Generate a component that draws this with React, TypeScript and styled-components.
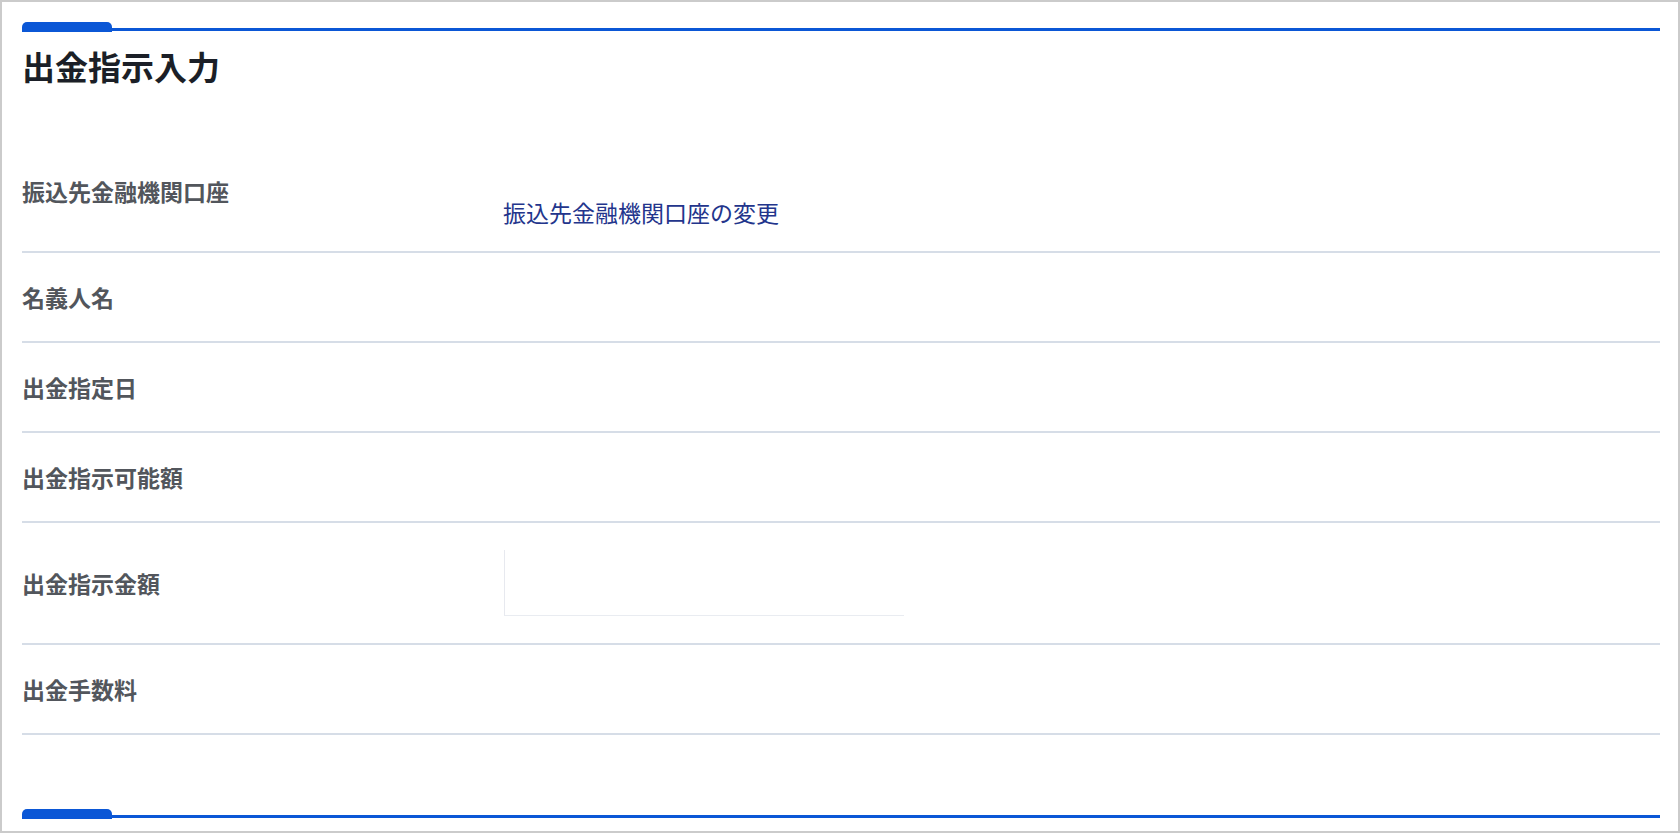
import styled, { createGlobalStyle } from 'styled-components'

const GlobalStyle = createGlobalStyle`
  html, body {
    margin: 0;
    padding: 0;
    background: #ffffff;
  }
  body {
    font-family: "Noto Sans CJK JP", "Noto Sans", sans-serif;
  }
`

const Frame = styled.div`
  box-sizing: border-box;
  width: 1680px;
  height: 833px;
  border: 2px solid #cbcbcb;
  padding: 20px 18px 0 20px;
  display: flex;
  flex-direction: column;
  background: #ffffff;
`

const Rule = styled.div`
  display: flex;
  align-items: flex-end;
  height: 10px;
  flex-shrink: 0;
`

const RuleTab = styled.div`
  width: 90px;
  height: 10px;
  background: #0b57d6;
  border-radius: 5px 5px 0 0;
`

const RuleLine = styled.div`
  flex: 1;
  height: 3px;
  margin-bottom: 1px;
  background: #0b57d6;
`

const Title = styled.h1`
  margin: 14px 0 0 0;
  height: 40px;
  line-height: 40px;
  font-size: 33px;
  font-weight: 700;
  color: #1b1f27;
`

const Table = styled.div`
  margin-top: 44px;
  display: flex;
  flex-direction: column;
`

const Row = styled.div<{ $height: number }>`
  display: grid;
  grid-template-columns: 483px 1fr;
  align-items: center;
  height: ${({ $height }) => $height}px;
  border-bottom: 2px solid #d6dde7;
`

const Label = styled.div`
  font-size: 23px;
  font-weight: 700;
  color: #52565c;
  line-height: 30px;
`

const ValueStack = styled.div`
  display: flex;
  flex-direction: column;
  gap: 24px;
  padding-bottom: 12px;
`

const Masked = styled.div`
  height: 30px;
`

const ChangeLink = styled.a`
  margin-left: -2px;
  font-size: 23px;
  line-height: 30px;
  color: #23358c;
  text-decoration: none;
  cursor: pointer;
`

const AmountInput = styled.input`
  box-sizing: border-box;
  width: 400px;
  height: 66px;
  margin-left: -1px;
  border: none;
  border-left: 1px solid #e7e9ef;
  border-bottom: 1px solid #e9ecf1;
  background: transparent;
  outline: none;
  font-size: 23px;
  font-family: inherit;
`

const Spacer = styled.div`
  flex: 1;
`

const BottomRule = styled(Rule)`
  margin-bottom: 12px;
`

const rows = [
  { label: '名義人名', height: 88 },
  { label: '出金指定日', height: 88 },
  { label: '出金指示可能額', height: 88 },
]

export default function App() {
  return (
    <>
      <GlobalStyle />
      <Frame>
        <Rule>
          <RuleTab />
          <RuleLine />
        </Rule>
        <Title>出金指示入力</Title>
        <Table>
          <Row $height={121}>
            <Label>振込先金融機関口座</Label>
            <ValueStack>
              <Masked />
              <ChangeLink>振込先金融機関口座の変更</ChangeLink>
            </ValueStack>
          </Row>
          {rows.map((r) => (
            <Row key={r.label} $height={r.height}>
              <Label>{r.label}</Label>
              <div />
            </Row>
          ))}
          <Row $height={120}>
            <Label>出金指示金額</Label>
            <div>
              <AmountInput type="text" aria-label="出金指示金額" />
            </div>
          </Row>
          <Row $height={88}>
            <Label>出金手数料</Label>
            <div />
          </Row>
        </Table>
        <Spacer />
        <BottomRule>
          <RuleTab />
          <RuleLine />
        </BottomRule>
      </Frame>
    </>
  )
}
